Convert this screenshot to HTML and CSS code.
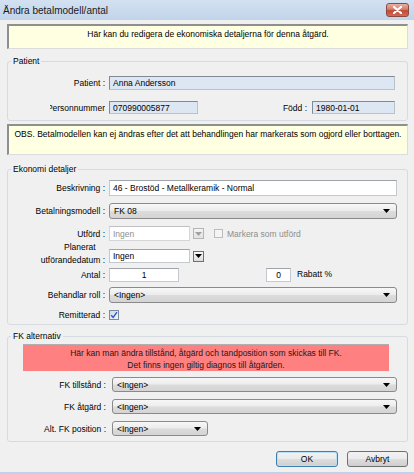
FILE: index.html
```html
<!DOCTYPE html>
<html lang="sv">
<head>
  <meta charset="UTF-8">
  <meta name="viewport" content="width=device-width, initial-scale=1.0">
  <title>Ändra betalmodell/antal</title>
  <link rel="stylesheet" href="styles.css">
</head>
<body>
  <div class="window">
    <div class="titlebar">
      <span>Ändra betalmodell/antal</span>
      <div class="close">
        <svg width="11" height="8" viewBox="0 0 11 8"><path d="M2 1 L9 7 M9 1 L2 7" stroke="#fff" stroke-width="2.2" stroke-linecap="round"/></svg>
      </div>
    </div>

    <div class="content">
      <div class="note note-info">Här kan du redigera de ekonomiska detaljerna för denna åtgärd.</div>

      <fieldset class="group group-patient">
        <legend>Patient</legend>
        <div class="row row-p1">
          <div class="label">Patient :</div>
          <div class="field readonly wide-p">Anna Andersson</div>
        </div>
        <div class="row row-p2">
          <div class="label label-clip"><span>Personnummer</span></div>
          <div class="field readonly pnr">070990005877</div>
          <div class="label-fodd">Född :</div>
          <div class="field readonly fodd">1980-01-01</div>
        </div>
      </fieldset>

      <div class="note note-obs">OBS. Betalmodellen kan ej ändras efter det att behandlingen har markerats som ogjord eller borttagen.</div>

      <fieldset class="group group-ekonomi">
        <legend>Ekonomi detaljer</legend>
        <div class="row r-besk">
          <div class="label">Beskrivning :</div>
          <div class="field text wide">46 - Brostöd - Metallkeramik - Normal</div>
        </div>
        <div class="row r-betal">
          <div class="label">Betalningsmodell :</div>
          <div class="combo wide"><span>FK 08</span><svg width="7" height="4" viewBox="0 0 7 4"><path d="M0 0 H7 L3.5 4 Z" fill="#000"/></svg></div>
        </div>
        <div class="row r-utford">
          <div class="label">Utförd :</div>
          <div class="field text disabled date">Ingen</div>
          <div class="drop-btn disabled"><svg width="7" height="4" viewBox="0 0 7 4"><path d="M0 0 H7 L3.5 4 Z" fill="#a0a0a0"/></svg></div>
          <div class="check disabled"></div>
          <span class="check-label">Markera som utförd</span>
        </div>
        <div class="row r-planerat">
          <div class="label label-two">
            <div class="two-lines">
              <span class="line-top">Planerat</span>
              <span>utförandedatum :</span>
            </div>
          </div>
          <div class="field text date">Ingen</div>
          <div class="drop-btn"><svg width="7" height="4" viewBox="0 0 7 4"><path d="M0 0 H7 L3.5 4 Z" fill="#000"/></svg></div>
        </div>
        <div class="row r-antal">
          <div class="label">Antal :</div>
          <div class="field text num antal">1</div>
          <div class="field text num rabatt">0</div>
          <span class="rabatt-label">Rabatt %</span>
        </div>
        <div class="row r-roll">
          <div class="label">Behandlar roll :</div>
          <div class="combo wide"><span>&lt;Ingen&gt;</span><svg width="7" height="4" viewBox="0 0 7 4"><path d="M0 0 H7 L3.5 4 Z" fill="#000"/></svg></div>
        </div>
        <div class="row r-remitterad">
          <div class="label">Remitterad :</div>
          <div class="check checked">
            <svg width="8" height="8" viewBox="0 0 8 8"><path d="M1.2 4.2 L3.2 6.4 L6.9 1.2" stroke="#2a58c4" stroke-width="1.4" fill="none"/></svg>
          </div>
        </div>
      </fieldset>

      <fieldset class="group group-fk">
        <legend>FK alternativ</legend>
        <div class="alert">Här kan man ändra tillstånd, åtgärd och tandposition som skickas till FK.<br>Det finns ingen giltig diagnos till åtgärden.</div>
        <div class="row r-fk1">
          <div class="label label-fk">FK tillstånd :</div>
          <div class="combo fk-wide"><span>&lt;Ingen&gt;</span><svg width="7" height="4" viewBox="0 0 7 4"><path d="M0 0 H7 L3.5 4 Z" fill="#000"/></svg></div>
        </div>
        <div class="row r-fk2">
          <div class="label label-fk">FK åtgärd :</div>
          <div class="combo fk-wide"><span>&lt;Ingen&gt;</span><svg width="7" height="4" viewBox="0 0 7 4"><path d="M0 0 H7 L3.5 4 Z" fill="#000"/></svg></div>
        </div>
        <div class="row r-fk3">
          <div class="label label-fk">Alt. FK position :</div>
          <div class="combo fk-small"><span>&lt;Ingen&gt;</span><svg width="7" height="4" viewBox="0 0 7 4"><path d="M0 0 H7 L3.5 4 Z" fill="#000"/></svg></div>
        </div>
      </fieldset>

      <div class="buttons">
        <div class="btn btn-default">OK</div>
        <div class="btn">Avbryt</div>
      </div>
    </div>
  </div>
</body>
</html>
```

FILE: styles.css
```css
* {
  box-sizing: border-box;
}
body {
  margin: 0;
  background-color: #f0f0f0;
  font-family: "Liberation Sans", Arial, sans-serif;
  font-size: 8.5px;
  color: #000;
}
.window {
  width: 414px;
  height: 474px;
  overflow: hidden;
  border-bottom: 2px solid #bfd2e8;
}
.titlebar {
  height: 20px;
  display: flex;
  align-items: center;
  justify-content: space-between;
  padding: 0 5px 0 3px;
  background: linear-gradient(#d3e1f1, #c2d4ea);
  font-size: 10px;
  color: #1a1a1a;
}
.close {
  width: 23px;
  height: 14px;
  border: 1px solid #8a4a40;
  border-radius: 3px;
  background: linear-gradient(#eab1a4, #d57a67 45%, #c24a35 55%, #cf6b55);
  display: flex;
  align-items: center;
  justify-content: center;
}
.content {
  padding: 4px 6px 0 7px;
}

/* gula infoboxar */
.note {
  background-color: #ffffe1;
  border: 1px solid #dcdcdc;
  border-top: 2px solid #8f8f8f;
  border-left: 2px solid #8f8f8f;
  text-align: center;
  padding-top: 3px;
}
.note-info {
  height: 25px;
}
.note-obs {
  height: 31px;
  margin-top: 3px;
}

/* grupper */
.group {
  margin: 0;
  padding: 0 10px 4px 0;
  border: 1px solid #d5dbe0;
  border-radius: 3px;
  min-width: 0;
}
.group legend {
  margin-left: 3px;
  padding: 0 2px;
  line-height: 10px;
}
.group-patient {
  margin-top: 7px;
  padding-top: 10px;
  padding-right: 12px;
  padding-bottom: 6px;
}
.group-ekonomi {
  margin-top: 9px;
  padding-top: 6px;
}
.group-fk {
  margin-top: 6px;
  padding-top: 3px;
  padding-bottom: 5px;
}

.row {
  display: flex;
  align-items: center;
}
.label {
  width: 97px;
  margin-right: 4px;
  text-align: right;
  flex-shrink: 0;
  white-space: nowrap;
}
.label-clip {
  width: 55px;
  margin-left: 42px;
  display: flex;
  justify-content: flex-end;
  overflow: hidden;
}
.label-clip span {
  flex-shrink: 0;
}
.label-two {
  display: flex;
  justify-content: flex-end;
  align-self: flex-start;
  margin-top: -8px;
  line-height: 13px;
}
.two-lines {
  display: flex;
  flex-direction: column;
  align-items: center;
}
.line-top {
  padding-left: 14px;
}
.label-fk {
  width: 98px;
  margin-right: 6px;
}

.row-p1 { height: 14px; }
.row-p2 { height: 13px; margin-top: 11px; }
.r-besk { height: 16px; }
.r-betal { height: 16px; margin-top: 7px; }
.r-utford { height: 15px; margin-top: 7px; }
.r-planerat { height: 14px; margin-top: 8px; }
.r-antal { height: 14px; margin-top: 5px; }
.r-roll { height: 16px; margin-top: 5px; }
.r-remitterad { height: 10px; margin-top: 7px; }
.r-fk1 { height: 15px; margin-top: 6px; }
.r-fk2 { height: 15px; margin-top: 7px; }
.r-fk3 { height: 15px; margin-top: 7px; }

/* fält */
.field {
  height: 100%;
  display: flex;
  align-items: center;
  padding-left: 3px;
  white-space: nowrap;
}
.readonly {
  background-color: #dde7f4;
  border: 1px solid #b9c3cc;
  border-top-color: #7f8a94;
  border-left-color: #7f8a94;
}
.wide-p {
  flex: 1;
}
.pnr {
  width: 89px;
}
.label-fodd {
  margin-left: 79px;
  width: 30px;
  text-align: right;
  margin-right: 5px;
}
.fodd {
  flex: 1;
}
.text {
  background-color: #fff;
  border: 1px solid #c5c9cf;
  border-top-color: #9ea3aa;
}
.wide {
  flex: 1;
}
.date {
  width: 81px;
}
.disabled {
  color: #8d8d8d;
}
.field.disabled {
  border-color: #d6d6d6;
  border-top-color: #c0c0c0;
}
.num {
  justify-content: center;
  padding-left: 0;
}
.antal {
  width: 70px;
}
.rabatt {
  width: 25px;
  margin-left: 87px;
}
.rabatt-label {
  margin-left: 6px;
  align-self: flex-start;
  margin-top: 1px;
}

.drop-btn {
  width: 11px;
  height: 11px;
  margin-left: 3px;
  border: 1px solid #707070;
  background: linear-gradient(#fafafa, #dcdcdc);
  display: flex;
  align-items: center;
  justify-content: center;
}
.drop-btn.disabled {
  border-color: #b5b5b5;
  background: linear-gradient(#f4f4f4, #e2e2e2);
}

.combo {
  height: 100%;
  display: flex;
  align-items: center;
  justify-content: space-between;
  padding: 0 6px 0 4px;
  border: 1px solid #8a8a8a;
  border-radius: 3px;
  background: linear-gradient(#f7f7f7, #ececec 48%, #dcdcdc 52%, #d4d4d4);
}
.fk-wide {
  width: 288px;
}
.fk-small {
  width: 96px;
}

.check {
  width: 10px;
  height: 10px;
  border: 1px solid #8f8f8f;
  background: linear-gradient(135deg, #dcdcdc, #fafafa);
  display: flex;
  align-items: center;
  justify-content: center;
}
.check.disabled {
  margin-left: 10px;
  width: 9px;
  height: 9px;
  border-color: #bcbcbc;
  background: #f4f4f4;
}
.check.checked {
  border-color: #7a8aa0;
  background: linear-gradient(135deg, #cfd9e6, #f4f6f9);
}
.check-label {
  margin-left: 4px;
  color: #8d8d8d;
}

.alert {
  margin: 0 8px 0 15px;
  height: 27px;
  padding-top: 2px;
  line-height: 12px;
  text-align: center;
  background-color: #ff8080;
  border-top: 1px solid #b0b0b0;
  color: #1a1a1a;
}

/* knappar */
.buttons {
  display: flex;
  justify-content: flex-end;
  gap: 9px;
  margin-top: 9px;
}
.btn {
  width: 61px;
  height: 16px;
  display: flex;
  align-items: center;
  justify-content: center;
  border: 1px solid #707070;
  border-radius: 3px;
  background: linear-gradient(#f2f2f2, #ebebeb 48%, #dddddd 52%, #cfcfcf);
}
.btn-default {
  width: 62px;
  border-color: #3c7fb1;
  box-shadow: inset 0 0 0 1px #b8e0f6;
}
```
